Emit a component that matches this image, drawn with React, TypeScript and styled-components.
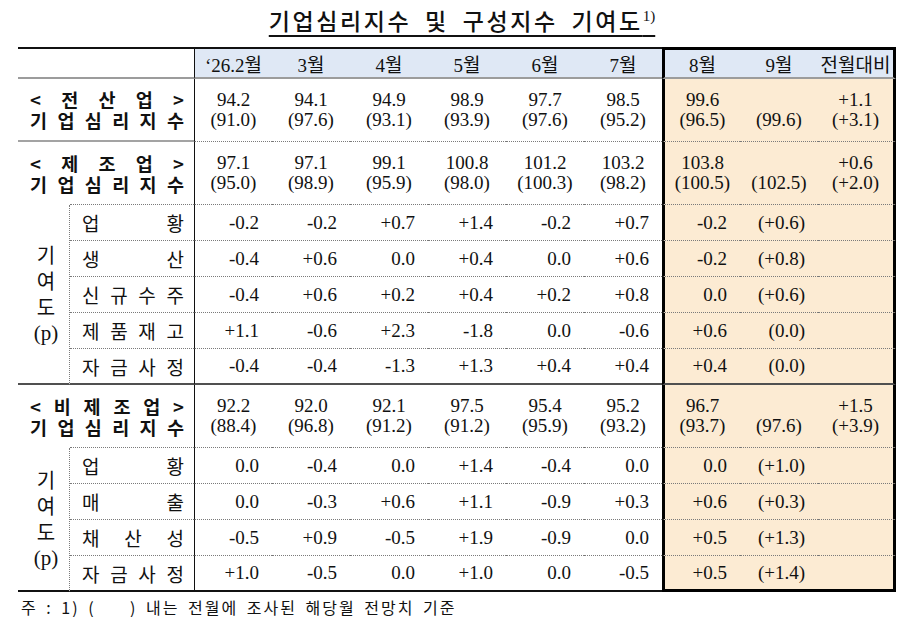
import React from 'react';
import styled, { createGlobalStyle } from 'styled-components';

const SERIF = `"Liberation Serif", "Noto Sans CJK KR", serif`;
const KR = `"Noto Sans CJK KR", sans-serif`;

const GlobalStyle = createGlobalStyle`
  body {
    margin: 0;
    background: #fff;
    color: #111;
  }
`;

const Page = styled.div`
  width: 907px;
  box-sizing: border-box;
  padding: 5px 11px 0 18px;
`;

const Title = styled.h1`
  margin: 0 0 12px;
  padding-left: 10px;
  text-align: center;
  font-family: ${KR};
  font-weight: 500;
  font-size: 23px;
  line-height: 30px;
  letter-spacing: 2.6px;
  word-spacing: 6px;
  color: #111;
  text-decoration: underline;
  text-decoration-thickness: 1.5px;
  text-underline-offset: 5px;

  sup {
    font-family: ${SERIF};
    font-size: 15px;
    letter-spacing: 0;
    line-height: 0;
    vertical-align: 9px;
  }
`;

const Table = styled.table`
  width: 878px;
  table-layout: fixed;
  border-collapse: separate;
  border-spacing: 0;
  font-family: ${SERIF};
  font-size: 19px;
  color: #111;
`;

type Line = 'head' | 'gray' | 'dot' | 'dark' | 'end' | 'cut';
type Edge = 'first' | 'left' | 'right';

const lines: Record<Line, string> = {
  head: '2px solid #9c9c9c',
  gray: '2px solid #a3a3a3',
  dot: '1px dotted #7a7a7a',
  dark: '2px solid #505050',
  end: '2px solid #111',
  cut: 'none',
};

const edgeCss = (edge?: Edge) => {
  if (edge === 'first') return 'border-left: 1px solid #111;';
  if (edge === 'left') return 'border-left: 3px solid #000;';
  if (edge === 'right') return 'border-right: 3px solid #000;';
  return '';
};

const HeadRow = styled.tr`
  height: 32px;
`;

const MainRow = styled.tr`
  height: 63px;
`;

const SubRow = styled.tr`
  height: 36px;
`;

const HeadCell = styled.th<{ $edge?: Edge; $box?: boolean; $blank?: boolean }>`
  padding: 0;
  font-weight: 400;
  font-size: 19px;
  text-align: center;
  vertical-align: middle;
  background: ${(p) => (p.$blank ? '#fff' : '#dfe8f5')};
  border-top: ${(p) => (p.$box ? '3px solid #000' : '2px solid #111')};
  border-bottom: ${lines.head};
  ${(p) => edgeCss(p.$edge)}
`;

const LabelCell = styled.td<{ $line: Line; $bold?: boolean }>`
  position: relative;
  padding: 0 10px 0 12px;
  font-family: ${KR};
  font-size: ${(p) => (p.$bold ? 18.5 : 19)}px;
  font-weight: ${(p) => (p.$bold ? 700 : 400)};
  line-height: 21px;
  vertical-align: middle;
  border-bottom: ${(p) => lines[p.$line]};

  ${(p) =>
    p.$line === 'cut' &&
    `&::after {
      content: '';
      position: absolute;
      left: 52px;
      right: 0;
      bottom: 0;
      border-bottom: ${lines.dot};
    }`}
`;

const Spread = styled.span`
  display: flex;
  justify-content: space-between;
`;

const GroupCell = styled.td<{ $line: Line }>`
  padding: 0;
  text-align: center;
  vertical-align: middle;
  font-family: ${KR};
  font-size: 20px;
  line-height: 26px;
  border-right: ${lines.dot};
  border-bottom: ${(p) => lines[p.$line]};
`;

const GroupText = styled.div`
  display: flex;
  flex-direction: column;
  align-items: center;
  padding-left: 5px;

  span:last-child {
    font-family: ${SERIF};
    font-size: 21px;
  }
`;

const NumCell = styled.td<{ $line: Line; $edge?: Edge; $peach?: boolean; $right?: boolean; $boxEnd?: boolean }>`
  padding: ${(p) => (p.$right ? '0 13px 0 0' : '0')};
  text-align: ${(p) => (p.$right ? 'right' : 'center')};
  vertical-align: middle;
  line-height: 20px;
  white-space: nowrap;
  background: ${(p) => (p.$peach ? '#fcebd3' : '#fff')};
  border-bottom: ${(p) => (p.$boxEnd ? '3px solid #000' : lines[p.$line === 'cut' ? 'dot' : p.$line])};
  ${(p) => edgeCss(p.$edge)}
`;

const Stack = styled.div`
  display: flex;
  flex-direction: column;
  align-items: center;
`;

const Note = styled.p`
  margin: 5px 0 0 3px;
  font-family: ${KR};
  font-size: 16px;
  line-height: 20px;
  letter-spacing: 2px;
  word-spacing: 3px;
  white-space: pre;
  color: #111;
`;

const months = ['‘26.2월', '3월', '4월', '5월', '6월', '7월', '8월', '9월', '전월대비'];

const edgeOf = (i: number): Edge | undefined =>
  i === 0 ? 'first' : i === 6 ? 'left' : i === 8 ? 'right' : undefined;

interface MainData {
  label: string[];
  top: string[];
  bottom: string[];
}

interface SubData {
  label: string[];
  values: string[];
}

const groups: { main: MainData; subs: SubData[] }[] = [
  {
    main: {
      label: ['<', '제', '조', '업', '>'],
      top: ['97.1', '97.1', '99.1', '100.8', '101.2', '103.2', '103.8', '', '+0.6'],
      bottom: ['(95.0)', '(98.9)', '(95.9)', '(98.0)', '(100.3)', '(98.2)', '(100.5)', '(102.5)', '(+2.0)'],
    },
    subs: [
      { label: ['업', '황'], values: ['-0.2', '-0.2', '+0.7', '+1.4', '-0.2', '+0.7', '-0.2', '(+0.6)'] },
      { label: ['생', '산'], values: ['-0.4', '+0.6', '0.0', '+0.4', '0.0', '+0.6', '-0.2', '(+0.8)'] },
      { label: ['신', '규', '수', '주'], values: ['-0.4', '+0.6', '+0.2', '+0.4', '+0.2', '+0.8', '0.0', '(+0.6)'] },
      { label: ['제', '품', '재', '고'], values: ['+1.1', '-0.6', '+2.3', '-1.8', '0.0', '-0.6', '+0.6', '(0.0)'] },
      { label: ['자', '금', '사', '정'], values: ['-0.4', '-0.4', '-1.3', '+1.3', '+0.4', '+0.4', '+0.4', '(0.0)'] },
    ],
  },
  {
    main: {
      label: ['<', '비', '제', '조', '업', '>'],
      top: ['92.2', '92.0', '92.1', '97.5', '95.4', '95.2', '96.7', '', '+1.5'],
      bottom: ['(88.4)', '(96.8)', '(91.2)', '(91.2)', '(95.9)', '(93.2)', '(93.7)', '(97.6)', '(+3.9)'],
    },
    subs: [
      { label: ['업', '황'], values: ['0.0', '-0.4', '0.0', '+1.4', '-0.4', '0.0', '0.0', '(+1.0)'] },
      { label: ['매', '출'], values: ['0.0', '-0.3', '+0.6', '+1.1', '-0.9', '+0.3', '+0.6', '(+0.3)'] },
      { label: ['채', '산', '성'], values: ['-0.5', '+0.9', '-0.5', '+1.9', '-0.9', '0.0', '+0.5', '(+1.3)'] },
      { label: ['자', '금', '사', '정'], values: ['+1.0', '-0.5', '0.0', '+1.0', '0.0', '-0.5', '+0.5', '(+1.4)'] },
    ],
  },
];

const total: MainData = {
  label: ['<', '전', '산', '업', '>'],
  top: ['94.2', '94.1', '94.9', '98.9', '97.7', '98.5', '99.6', '', '+1.1'],
  bottom: ['(91.0)', '(97.6)', '(93.1)', '(93.9)', '(97.6)', '(95.2)', '(96.5)', '(99.6)', '(+3.1)'],
};

const indexLabel = ['기', '업', '심', '리', '지', '수'];

function MainLine({ data, labelLine, line }: { data: MainData; labelLine: Line; line: Line }) {
  return (
    <MainRow>
      <LabelCell colSpan={2} $bold $line={labelLine}>
        <Spread>
          {data.label.map((c, i) => (
            <span key={i}>{c}</span>
          ))}
        </Spread>
        <Spread>
          {indexLabel.map((c, i) => (
            <span key={i}>{c}</span>
          ))}
        </Spread>
      </LabelCell>
      {data.top.map((t, i) => (
        <NumCell key={i} $line={line} $edge={edgeOf(i)} $peach={i >= 6}>
          <Stack>
            <span>{t || '\u00a0'}</span>
            <span>{data.bottom[i]}</span>
          </Stack>
        </NumCell>
      ))}
    </MainRow>
  );
}

export default function App() {
  return (
    <Page>
      <GlobalStyle />
      <Title>
        기업심리지수 및 구성지수 기여도<sup>1)</sup>
      </Title>
      <Table>
        <colgroup>
          <col style={{ width: 52 }} />
          <col style={{ width: 124 }} />
          {months.map((m) => (
            <col key={m} style={{ width: 78 }} />
          ))}
        </colgroup>
        <thead>
          <HeadRow>
            <HeadCell colSpan={2} $blank />
            {months.map((m, i) => (
              <HeadCell key={m} $edge={edgeOf(i)} $box={i >= 6}>
                {m}
              </HeadCell>
            ))}
          </HeadRow>
        </thead>
        <tbody>
          <MainLine data={total} labelLine="gray" line="dot" />
          {groups.map((g, gi) => {
            const last = gi === groups.length - 1;
            return (
              <React.Fragment key={gi}>
                <MainLine data={g.main} labelLine="cut" line="dot" />
                {g.subs.map((s, si) => {
                  const end = si === g.subs.length - 1;
                  const line: Line = end ? (last ? 'end' : 'dark') : 'dot';
                  return (
                    <SubRow key={si}>
                      {si === 0 && (
                        <GroupCell rowSpan={g.subs.length} $line={last ? 'end' : 'dark'}>
                          <GroupText>
                            <span>기</span>
                            <span>여</span>
                            <span>도</span>
                            <span>(p)</span>
                          </GroupText>
                        </GroupCell>
                      )}
                      <LabelCell $line={line}>
                        <Spread>
                          {s.label.map((c, i) => (
                            <span key={i}>{c}</span>
                          ))}
                        </Spread>
                      </LabelCell>
                      {[...s.values, ''].map((v, i) => (
                        <NumCell
                          key={i}
                          $right
                          $line={line}
                          $edge={edgeOf(i)}
                          $peach={i >= 6}
                          $boxEnd={last && end && i >= 6}
                        >
                          {v}
                        </NumCell>
                      ))}
                    </SubRow>
                  );
                })}
              </React.Fragment>
            );
          })}
        </tbody>
      </Table>
      <Note>주 : 1) (    ) 내는 전월에 조사된 해당월 전망치 기준</Note>
    </Page>
  );
}
